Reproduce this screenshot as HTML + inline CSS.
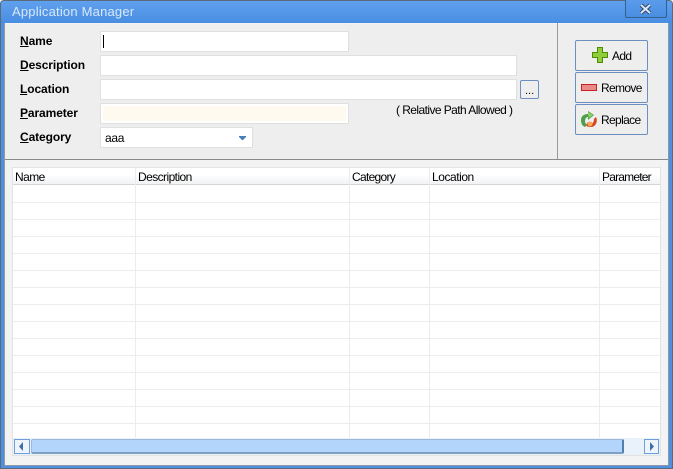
<!DOCTYPE html>
<html><head><meta charset="utf-8"><style>
html,body{margin:0;padding:0;background:#f0f0f0}
body{width:673px;height:469px;overflow:hidden;position:relative;font-family:"Liberation Sans",sans-serif;font-size:12px;color:#000}
.a{position:absolute;box-sizing:border-box}
.t{position:absolute;white-space:nowrap;line-height:14px;letter-spacing:-.57px}
.l{font-weight:bold;left:20px;font-size:12px;letter-spacing:-.1px}
.l u{text-decoration:underline}
.i{position:absolute;box-sizing:border-box;border:1px solid #e0e0e0;background:#fff}
.b{position:absolute;box-sizing:border-box;border:1px solid #6a8fc0;border-radius:2px;background:#eeeeee;left:575px;width:73px;height:31px}
.h{top:170px;font-size:12px}
.bt{letter-spacing:-.65px}
</style></head><body>
<div class="a" style="left:0;top:0;width:673px;height:469px;background:#4f8fe0;border:1px solid #5a6a7a;border-radius:4px 4px 0 0"></div>
<div class="a" style="left:1px;top:1px;width:671px;height:22px;background:linear-gradient(#5fa0ee,#4a8ee2);border-radius:3px 3px 0 0"></div>
<div class="t" style="left:12px;top:4px;font-size:13px;line-height:16px;color:#d8e8fa;letter-spacing:.2px">Application Manager</div>
<div class="a" style="left:625px;top:0;width:42px;height:18px;border:1px solid #33608f;border-top:0;border-radius:0 0 2px 2px;background:linear-gradient(#5a9bea,#4a8ee2)"></div>
<svg class="a" style="left:638px;top:3px" width="16" height="12"><path d="M3 2L12 10M12 2L3 10" stroke="#2f4a6c" stroke-width="4"/><path d="M3 2L12 10M12 2L3 10" stroke="#dce8f6" stroke-width="2"/></svg>
<div class="a" style="left:4px;top:23px;width:665px;height:443px;background:#f3f3f3;border-right:1px solid #8a97a5;border-left:1px solid #8a9aaa;border-bottom:1px solid #8a9aaa"></div>
<div class="a" style="left:5px;top:24px;width:663px;height:136px;background:#eeeeee;border-bottom:1px solid #8a8a8a"></div>
<div class="a" style="left:557px;top:23px;width:1px;height:136px;background:#9a9a9a"></div>

<div class="t l" style="top:34px"><u>N</u>ame</div>
<div class="t l" style="top:58px"><u>D</u>escription</div>
<div class="t l" style="top:82px"><u>L</u>ocation</div>
<div class="t l" style="top:106px"><u>P</u>arameter</div>
<div class="t l" style="top:130px"><u>C</u>ategory</div>

<div class="i" style="left:100px;top:31px;width:249px;height:21px"></div>
<div class="a" style="left:103px;top:35px;width:1px;height:13px;background:#000"></div>
<div class="i" style="left:100px;top:55px;width:417px;height:21px"></div>
<div class="i" style="left:100px;top:79px;width:417px;height:21px"></div>
<div class="i" style="left:100px;top:103px;width:249px;height:21px;box-shadow:inset 0 0 0 2px #fff;background:#fffaf0"></div>
<div class="i" style="left:100px;top:127px;width:153px;height:21px"></div>
<div class="t" style="left:105px;top:131px;font-size:12px;letter-spacing:-.3px">aaa</div>
<svg class="a" style="left:239px;top:136px" width="9" height="5"><path d="M0 0H7V1L4 4H3L0 1Z" fill="#4a7ebb"/></svg>
<div class="a" style="left:520px;top:80px;width:19px;height:19px;border:1px solid #6a8fc0;border-radius:2px;background:#eee"></div>
<div class="t" style="left:525px;top:84px;font-size:11px;letter-spacing:0">...</div>
<div class="t" style="left:396px;top:103px;font-size:12px">( Relative Path Allowed )</div>

<div class="b" style="top:40px"></div>
<div class="b" style="top:72px"></div>
<div class="b" style="top:104px"></div>
<svg class="a" style="left:592px;top:47px" width="17" height="17"><path d="M5.500 .5H10.500V5.500H15.500V10.500H10.500V15.500H5.500V10.500H.5V5.500H5.500Z" fill="#8fce3a" stroke="#4f8a00"/></svg>
<div class="t bt" style="left:612px;top:49px">Add</div>
<svg class="a" style="left:581px;top:84px" width="17" height="8"><rect x=".5" y=".5" width="15" height="6" fill="#e88a8a" stroke="#cc2020"/></svg>
<div class="t bt" style="left:601px;top:81px">Remove</div>
<svg class="a" style="left:580px;top:111px" width="18" height="18"><path d="M1 9C1 5 4 3 8 3V0L14 4L8 9V6C6 6 5 8 5 10C5 12 6 13 7 14L5 16C2 15 1 12 1 9Z" fill="#4f9f48"/><path d="M8 3V1L13 4L9 7Z" fill="#8ecf6a"/><path d="M16 6C18 10 16 16 11 16C9 16 7 16 6 14L8 11L11 13C13 13 14 10 14 8Z" fill="#d9431c"/><circle cx="10" cy="13" r="2.500" fill="#f7a65a"/></svg>
<div class="t bt" style="left:601px;top:113px">Replace</div>

<div class="a" style="left:12px;top:167px;width:649px;height:289px;background:#fff;border:1px solid #e3e3e3;overflow:hidden">
<div class="a" style="left:0;top:0;width:647px;height:17px;background:linear-gradient(#fff 40%,#f1f2f4);border-bottom:1px solid #d5d5d5"></div>
<div class="a" style="left:0;top:34px;width:647px;height:1px;background:#ececec"></div>
<div class="a" style="left:0;top:51px;width:647px;height:1px;background:#ececec"></div>
<div class="a" style="left:0;top:68px;width:647px;height:1px;background:#ececec"></div>
<div class="a" style="left:0;top:85px;width:647px;height:1px;background:#ececec"></div>
<div class="a" style="left:0;top:102px;width:647px;height:1px;background:#ececec"></div>
<div class="a" style="left:0;top:119px;width:647px;height:1px;background:#ececec"></div>
<div class="a" style="left:0;top:136px;width:647px;height:1px;background:#ececec"></div>
<div class="a" style="left:0;top:153px;width:647px;height:1px;background:#ececec"></div>
<div class="a" style="left:0;top:170px;width:647px;height:1px;background:#ececec"></div>
<div class="a" style="left:0;top:187px;width:647px;height:1px;background:#ececec"></div>
<div class="a" style="left:0;top:204px;width:647px;height:1px;background:#ececec"></div>
<div class="a" style="left:0;top:221px;width:647px;height:1px;background:#ececec"></div>
<div class="a" style="left:0;top:238px;width:647px;height:1px;background:#ececec"></div>
<div class="a" style="left:0;top:255px;width:647px;height:1px;background:#ececec"></div>
<div class="a" style="left:122px;top:0;width:1px;height:270px;background:#ececec"></div>
<div class="a" style="left:336px;top:0;width:1px;height:270px;background:#ececec"></div>
<div class="a" style="left:416px;top:0;width:1px;height:270px;background:#ececec"></div>
<div class="a" style="left:586px;top:0;width:1px;height:270px;background:#ececec"></div>
<div class="a" style="left:0;top:270px;width:647px;height:17px;background:#e9f1fb"></div>
</div>
<div class="t h" style="left:15px">Name</div>
<div class="t h" style="left:138px">Description</div>
<div class="t h" style="left:352px;letter-spacing:-.7px">Category</div>
<div class="t h" style="left:432px;letter-spacing:-.45px">Location</div>
<div class="t h" style="left:602px;letter-spacing:-.8px">Parameter</div>

<div class="a" style="left:14px;top:439px;width:16px;height:15px;border:1px solid #6f9ed8;background:#eef4fc"></div>
<svg class="a" style="left:18px;top:442px" width="8" height="9"><path d="M5 0V9L1 4.500Z" fill="#3f6ea8"/></svg>
<div class="a" style="left:31px;top:439px;width:593px;height:15px;background:#b3d4fb;border:1px solid #9db8d8;border-right:2px solid #4f7fae;border-bottom:2px solid #7fa0c0;border-radius:2px"></div>
<div class="a" style="left:644px;top:439px;width:15px;height:15px;border:1px solid #6f9ed8;background:#eef4fc"></div>
<svg class="a" style="left:649px;top:442px" width="8" height="9"><path d="M1 0V9L5 4.500Z" fill="#3f6ea8"/></svg>
</body></html>
